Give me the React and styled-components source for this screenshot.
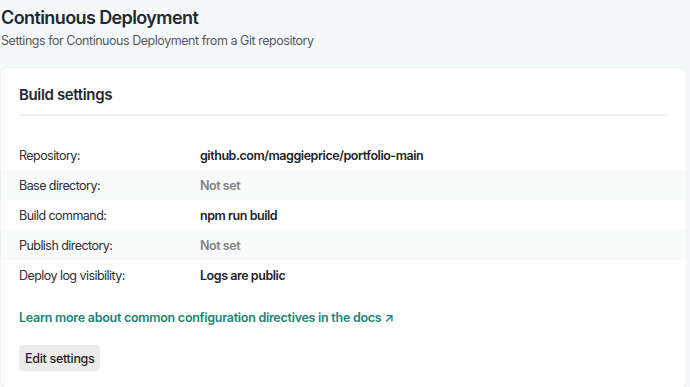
import React from "react";
import styled, { createGlobalStyle } from "styled-components";

const Global = createGlobalStyle`
  html, body { margin: 0; padding: 0; background: #f6f9fa; }
  body { font-family: Inter, "Noto Sans", sans-serif; -webkit-font-smoothing: antialiased; }
`;

const Page = styled.div`
  padding: 5px 4px 0 1px;
  display: flex;
  flex-direction: column;
`;

const Title = styled.h1`
  margin: 0;
  font-size: 18px;
  line-height: 26px;
  font-weight: 600;
  color: #1f2933;
  letter-spacing: -0.6px;
`;

const Subtitle = styled.p`
  margin: 1px 0 0;
  font-size: 12.5px;
  line-height: 18px;
  color: #545a61;
  letter-spacing: -0.46px;
`;

const Card = styled.section`
  margin-top: 18px;
  background: #fff;
  border-radius: 6px;
  box-shadow: 0 0 0 1px #eef1f2;
  padding: 16px 0 16px;
`;

const CardHeader = styled.div`
  margin: 0 18px;
  padding-bottom: 8px;
  border-bottom: 2px solid #f0f2f3;
`;

const CardTitle = styled.h2`
  margin: 0;
  font-size: 15px;
  line-height: 22px;
  font-weight: 600;
  color: #1f2933;
  letter-spacing: -0.35px;
`;

const Rows = styled.dl`
  margin: 24px 0 0;
  display: flex;
  flex-direction: column;
`;

const Row = styled.div`
  display: grid;
  grid-template-columns: 181px 1fr;
  align-items: center;
  height: 30px;
  padding: 0 18px;
  background: ${(p) => (p.$striped ? "#f9fafa" : "transparent")};
`;

const Label = styled.dt`
  margin: 0;
  font-size: 12.5px;
  color: #2b3034;
  letter-spacing: -0.55px;
`;

const Value = styled.dd`
  margin: 0;
  font-size: 12.5px;
  font-weight: 600;
  letter-spacing: -0.45px;
  color: ${(p) => (p.$muted ? "#7b8388" : "#1f2428")};
`;

const Footer = styled.div`
  padding: 19px 18px 0;
  display: flex;
  flex-direction: column;
  align-items: flex-start;
  gap: 18px;
`;

const DocLink = styled.a`
  font-size: 12.5px;
  font-weight: 600;
  color: #1a8575;
  text-decoration: none;
  line-height: 18px;
  letter-spacing: -0.27px;
`;

const Button = styled.button`
  font-family: inherit;
  font-size: 12.5px;
  font-weight: 500;
  color: #1f2428;
  background: #ebebeb;
  border: none;
  border-radius: 4px;
  height: 26px;
  padding: 0 6px;
  letter-spacing: -0.3px;
`;

const rows = [
  ["Repository:", "github.com/maggieprice/portfolio-main", false],
  ["Base directory:", "Not set", true],
  ["Build command:", "npm run build", false],
  ["Publish directory:", "Not set", true],
  ["Deploy log visibility:", "Logs are public", false],
];

export default function App() {
  return (
    <>
      <Global />
      <Page>
        <Title>Continuous Deployment</Title>
        <Subtitle>Settings for Continuous Deployment from a Git repository</Subtitle>
        <Card>
          <CardHeader>
            <CardTitle>Build settings</CardTitle>
          </CardHeader>
          <Rows>
            {rows.map(([l, v, muted], i) => (
              <Row key={l} $striped={i % 2 === 1}>
                <Label>{l}</Label>
                <Value $muted={muted}>{v}</Value>
              </Row>
            ))}
          </Rows>
          <Footer>
            <DocLink href="#">Learn more about common configuration directives in the docs ↗</DocLink>
            <Button>Edit settings</Button>
          </Footer>
        </Card>
      </Page>
    </>
  );
}
